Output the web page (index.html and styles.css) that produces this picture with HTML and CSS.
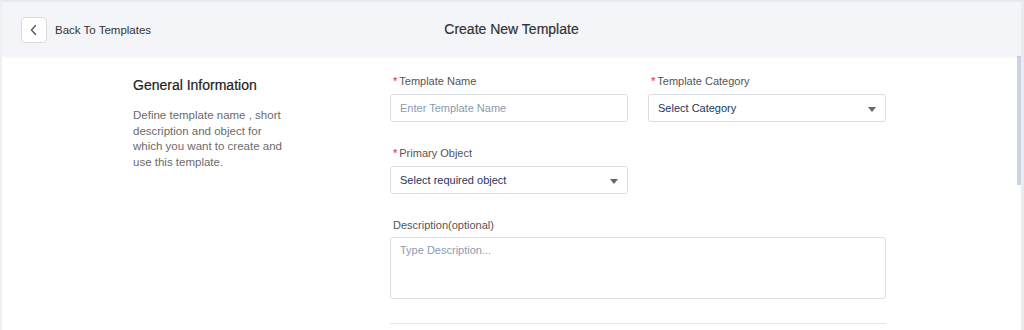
FILE: index.html
```html
<!DOCTYPE html>
<html>
<head>
<meta charset="utf-8">
<link rel="stylesheet" href="styles.css">
</head>
<body>
<div class="app">
  <header class="topbar">
    <div class="back">
      <button class="back-btn" aria-label="Back">
        <svg width="10" height="12" viewBox="0 0 10 12"><path d="M6.5 1.5 L2.5 6 L6.5 10.5" fill="none" stroke="#555" stroke-width="1.3" stroke-linecap="round" stroke-linejoin="round"/></svg>
      </button>
      <span class="back-label">Back To Templates</span>
    </div>
    <h1 class="title">Create New Template</h1>
  </header>
  <main class="content">
    <div class="scroll-thumb"></div>
    <div class="layout">
      <section class="intro">
        <h2 class="intro-title">General Information</h2>
        <p class="intro-text">Define template name , short description and object for which you want to create and use this template.</p>
      </section>
      <section class="form">
        <div class="row">
          <div class="field">
            <label class="label"><span class="req">*</span>Template Name</label>
            <div class="input placeholder">Enter Template Name</div>
          </div>
          <div class="field">
            <label class="label"><span class="req">*</span>Template Category</label>
            <div class="input select">Select Category<span class="caret"></span></div>
          </div>
        </div>
        <div class="row">
          <div class="field">
            <label class="label"><span class="req">*</span>Primary Object</label>
            <div class="input select">Select required object<span class="caret"></span></div>
          </div>
        </div>
        <div class="field">
          <label class="label label-tight">Description(optional)</label>
          <div class="textarea placeholder">Type Description...</div>
        </div>
        <div class="divider"></div>
      </section>
    </div>
  </main>
</div>
</body>
</html>
```
FILE: styles.css
```css
* { box-sizing: border-box; }
html, body { margin: 0; padding: 0; }
body {
  font-family: "Liberation Sans", Arial, sans-serif;
  color: #333;
  background: #fff;
}
.app {
  width: 1024px;
  height: 330px;
  border-top: 2px solid #e6e9ee;
  border-left: 2px solid #eef0f3;
  border-right: 3px solid #e9ebef;
  display: flex;
  flex-direction: column;
  overflow: hidden;
}
.topbar {
  height: 54px;
  flex: 0 0 54px;
  background: #f3f5f8;
  box-shadow: 0 1px 2px rgba(0,0,0,0.06);
  display: flex;
  align-items: center;
  position: relative;
  z-index: 1;
  padding: 2px 0 0 19px;
}
.back { display: flex; align-items: center; gap: 8px; }
.back-btn {
  width: 26px; height: 26px;
  border: 1px solid #d9dbdf;
  border-radius: 4px;
  background: #fff;
  display: flex; align-items: center; justify-content: center;
  padding: 0;
}
.back-label { font-size: 11.5px; color: #333; }
.title {
  position: absolute;
  left: 0; right: 0;
  top: 19px;
  text-align: center;
  margin: 0;
  font-size: 14px;
  line-height: 16px;
  font-weight: normal;
  color: #333;
  pointer-events: none;
  -webkit-text-stroke: 0.2px #333;
}
.content {
  flex: 1;
  position: relative;
  overflow: hidden;
}
.scroll-thumb {
  position: absolute;
  right: 0;
  top: 0;
  width: 4px;
  height: 129px;
  background: #ccd4e2;
}
.layout {
  display: grid;
  grid-template-columns: 257px 496px;
  padding: 18px 0 0 131px;
  align-content: start;
}
.intro-title {
  margin: 2px 0 0;
  font-size: 14px;
  font-weight: normal;
  line-height: 18px;
  color: #222;
  -webkit-text-stroke: 0.2px #222;
}
.intro-text {
  margin: 14px 0 0;
  width: 152px;
  font-size: 11.5px;
  line-height: 15.6px;
  color: #6b6b6b;
}
.form { display: flex; flex-direction: column; }
.row { display: grid; grid-template-columns: 238px 238px; gap: 20px; margin-bottom: 24px; }
.field { display: flex; flex-direction: column; }
.label {
  font-size: 11px;
  line-height: 14px;
  color: #555;
  margin-bottom: 6px;
  padding-left: 3px;
}
.label-tight { margin-bottom: 5px; }
.req { color: #e0162b; margin-right: 2px; }
.input {
  height: 28px;
  border: 1px solid #dadde1;
  border-radius: 3px;
  font-size: 11px;
  display: flex;
  align-items: center;
  padding: 0 9px;
  background: #fff;
  position: relative;
}
.placeholder { color: #8b9ab3; }
.select { color: #1e3560; }
.caret {
  position: absolute;
  right: 9px;
  top: 12px;
  width: 0; height: 0;
  border-left: 4px solid transparent;
  border-right: 4px solid transparent;
  border-top: 5px solid #666;
}
.textarea {
  height: 62px;
  border: 1px solid #dadde1;
  border-radius: 3px;
  font-size: 11px;
  padding: 6px 9px;
}
.divider {
  margin-top: 24px;
  height: 1px;
  background: #e4e6ea;
}
```
